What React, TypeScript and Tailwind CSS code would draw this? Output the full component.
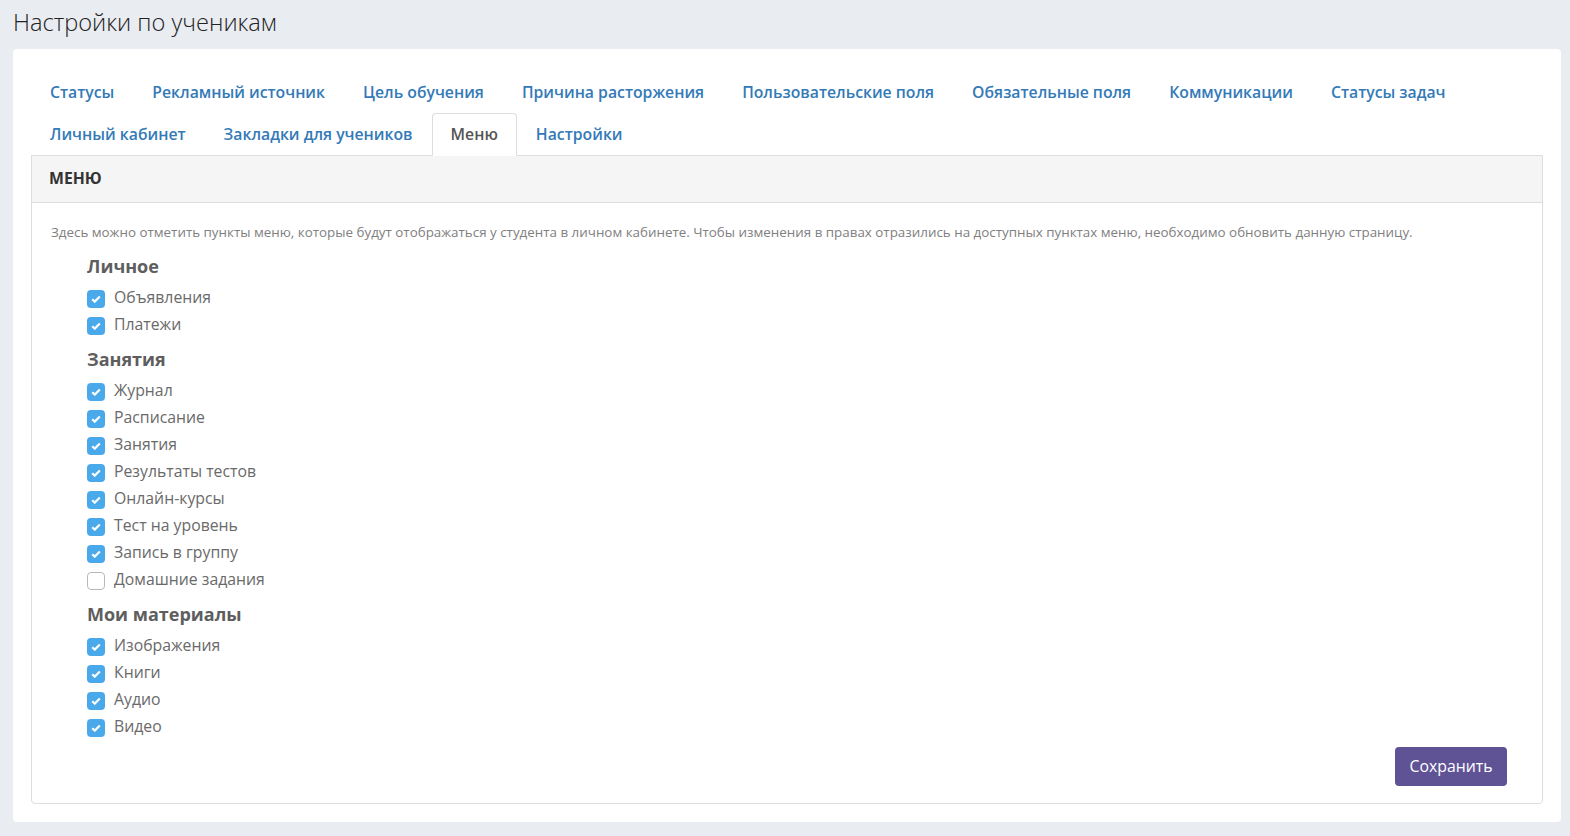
const tabs1 = ["Статусы","Рекламный источник","Цель обучения","Причина расторжения","Пользовательские поля","Обязательные поля","Коммуникации","Статусы задач"];
const groups: { title: string; items: [string, boolean][] }[] = [
  { title: "Личное", items: [["Объявления", true],["Платежи", true]] },
  { title: "Занятия", items: [["Журнал", true],["Расписание", true],["Занятия", true],["Результаты тестов", true],["Онлайн-курсы", true],["Тест на уровень", true],["Запись в группу", true],["Домашние задания", false]] },
  { title: "Мои материалы", items: [["Изображения", true],["Книги", true],["Аудио", true],["Видео", true]] },
];

function Tab({ label, active }: { label: string; active?: boolean }) {
  return active ? (
    <div className="h-[43px] -mb-px pt-[1px] px-[18px] flex items-center text-[15.77px] font-semibold text-[#555] bg-white border border-[#ddd] border-b-white rounded-t-[4px] relative z-10">{label}</div>
  ) : (
    <div className="h-[42px] pt-[2px] px-[19px] flex items-center text-[15.77px] font-semibold text-[#337ab7]">{label}</div>
  );
}

function Check({ label, on }: { label: string; on: boolean }) {
  return (
    <div className="h-[27px] flex items-center">
      {on ? (
        <span className="w-[18px] h-[18px] mt-[2px] rounded-[4px] bg-[#4aa9ea] flex items-center justify-center">
          <svg width="10" height="8" viewBox="0 0 10 8"><path d="M1.2 4.2 3.8 6.6 8.8 1.5" fill="none" stroke="#fff" strokeWidth="2.2" /></svg>
        </span>
      ) : (
        <span className="w-[18px] h-[18px] mt-[2px] rounded-[4px] bg-white border border-[#b5b9bf]" />
      )}
      <span className="ml-[9px] text-[15.8px] text-[#6a6a6a]">{label}</span>
    </div>
  );
}

export default function App() {
  return (
    <div className="h-[836px] bg-[#e9ecf1] pl-[13px] pr-[9px] overflow-hidden" style={{ fontFamily: '"Open Sans", sans-serif' }}>
      <h1 className="h-[49px] pt-[5px] text-[23.6px] leading-[34px] font-light text-[#222]">Настройки по ученикам</h1>
      <div className="h-[773px] bg-white rounded-[4px] pt-[22px] px-[18px]">
        <div className="flex flex-wrap">
          {tabs1.map((t) => <Tab key={t} label={t} />)}
        </div>
        <div className="flex">
          <Tab label="Личный кабинет" />
          <Tab label="Закладки для учеников" />
          <Tab label="Меню" active />
          <Tab label="Настройки" />
        </div>
        <div className="h-[649px] border border-[#ddd] rounded-b-[4px] flex flex-col">
          <div className="h-[47px] shrink-0 bg-[#f5f5f5] border-b border-[#ddd] pl-[17px] flex items-center text-[15.8px] font-bold text-[#333]">МЕНЮ</div>
          <div className="px-[19px] pt-[20px] text-[13.38px] leading-[18px] text-[#808080]">
            Здесь можно отметить пункты меню, которые будут отображаться у студента в личном кабинете. Чтобы изменения в правах отразились на доступных пунктах меню, необходимо обновить данную страницу.
          </div>
          <div className="pl-[55px] pt-[11px] flex flex-col">
            {groups.map((g) => (
              <div key={g.title} className="mb-[7px] last:mb-0">
                <div className="h-[32px] pb-[4px] flex items-center text-[18px] font-bold text-[#5e5e5e]">{g.title}</div>
                {g.items.map(([l, on]) => <Check key={l} label={l} on={on} />)}
              </div>
            ))}
          </div>
          <div className="flex justify-end pr-[35px] pt-[7px]">
            <button className="w-[112px] h-[39px] rounded-[4px] bg-[#5f5396] text-white text-[15.8px]">Сохранить</button>
          </div>
        </div>
      </div>
    </div>
  );
}
